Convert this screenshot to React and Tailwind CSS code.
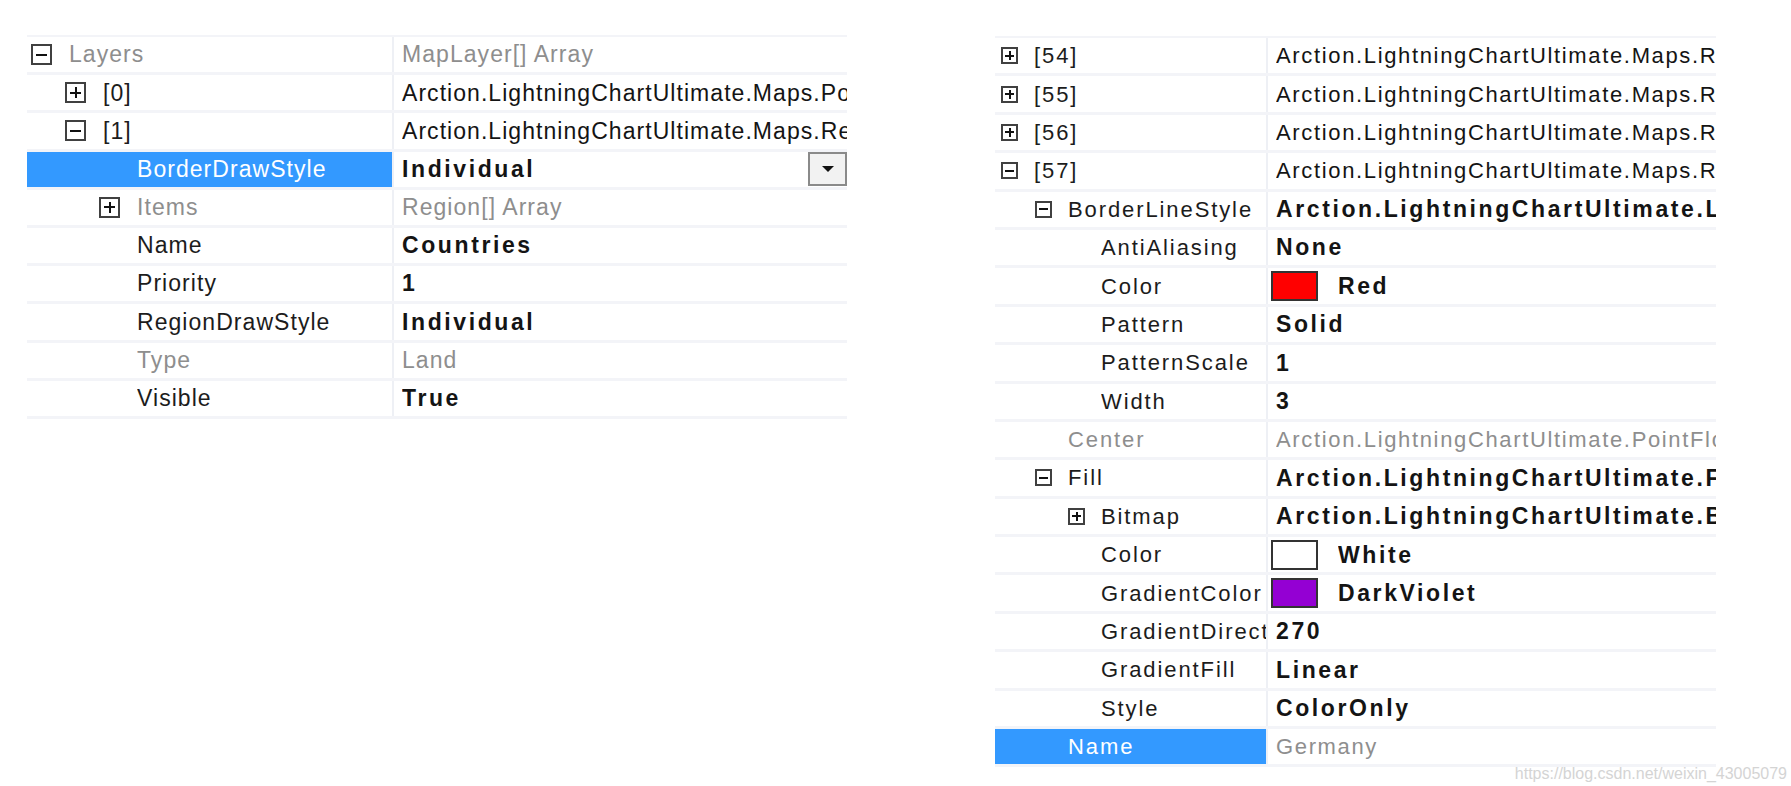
import React from 'react';

const INDENT = {
  left: ['pl-[4px]', 'pl-[38px]', 'pl-[72px]'],
  right: ['pl-[6px]', 'pl-[40px]', 'pl-[73px]'],
};

const LEFT_ROWS = [
  { level: 0, box: '-', label: 'Layers', value: 'MapLayer[] Array', muted: true },
  { level: 1, box: '+', label: '[0]', value: 'Arction.LightningChartUltimate.Maps.PolygonLayer' },
  { level: 1, box: '-', label: '[1]', value: 'Arction.LightningChartUltimate.Maps.RegionLayer' },
  { level: 2, label: 'BorderDrawStyle', value: 'Individual', bold: true, selected: true, dropdown: true },
  { level: 2, box: '+', label: 'Items', value: 'Region[] Array', muted: true },
  { level: 2, label: 'Name', value: 'Countries', bold: true },
  { level: 2, label: 'Priority', value: '1', bold: true },
  { level: 2, label: 'RegionDrawStyle', value: 'Individual', bold: true },
  { level: 2, label: 'Type', value: 'Land', muted: true },
  { level: 2, label: 'Visible', value: 'True', bold: true },
];

const RIGHT_ROWS = [
  { level: 0, box: '+', label: '[54]', value: 'Arction.LightningChartUltimate.Maps.Region' },
  { level: 0, box: '+', label: '[55]', value: 'Arction.LightningChartUltimate.Maps.Region' },
  { level: 0, box: '+', label: '[56]', value: 'Arction.LightningChartUltimate.Maps.Region' },
  { level: 0, box: '-', label: '[57]', value: 'Arction.LightningChartUltimate.Maps.Region' },
  { level: 1, box: '-', label: 'BorderLineStyle', value: 'Arction.LightningChartUltimate.LineStyle', bold: true },
  { level: 2, label: 'AntiAliasing', value: 'None', bold: true },
  { level: 2, label: 'Color', value: 'Red', bold: true, swatch: 'bg-[#ff0000]' },
  { level: 2, label: 'Pattern', value: 'Solid', bold: true },
  { level: 2, label: 'PatternScale', value: '1', bold: true },
  { level: 2, label: 'Width', value: '3', bold: true },
  { level: 1, label: 'Center', value: 'Arction.LightningChartUltimate.PointFloat', muted: true },
  { level: 1, box: '-', label: 'Fill', value: 'Arction.LightningChartUltimate.Fill', bold: true },
  { level: 2, box: '+', label: 'Bitmap', value: 'Arction.LightningChartUltimate.BitmapFill', bold: true },
  { level: 2, label: 'Color', value: 'White', bold: true, swatch: 'bg-white' },
  { level: 2, label: 'GradientColor', value: 'DarkViolet', bold: true, swatch: 'bg-[#9400d3]' },
  { level: 2, label: 'GradientDirection', value: '270', bold: true },
  { level: 2, label: 'GradientFill', value: 'Linear', bold: true },
  { level: 2, label: 'Style', value: 'ColorOnly', bold: true },
  { level: 1, label: 'Name', value: 'Germany', muted: true, selected: true },
];

function ExpandBox({ kind, small }) {
  return (
    <span
      className={`relative shrink-0 flex items-center justify-center border-2 border-[#404040] bg-white ${
        small ? 'w-[17px] h-[17px]' : 'w-[21px] h-[21px]'
      }`}
    >
      <span className={`absolute h-[2px] bg-[#111] ${small ? 'w-[9px]' : 'w-[11px]'}`} />
      {kind === '+' && (
        <span className={`absolute w-[2px] bg-[#111] ${small ? 'h-[9px]' : 'h-[11px]'}`} />
      )}
    </span>
  );
}

function DropButton() {
  return (
    <span className="shrink-0 w-[39px] h-[34px] border-2 border-[#8a8a8a] bg-[#f2f2f2] flex items-center justify-center">
      <svg width="14" height="8" viewBox="0 0 14 8">
        <path d="M1 1 L13 1 L7 7 Z" fill="#111" />
      </svg>
    </span>
  );
}

function Row({ row, side }) {
  const right = side === 'right';
  const labelText = right
    ? 'text-[22px] tracking-[1.9px]'
    : 'text-[23px] tracking-[1.05px]';
  const valueText = right
    ? 'text-[22px] tracking-[1.65px]'
    : 'text-[23px] tracking-[1.05px]';
  const bold = 'text-[23px] font-bold tracking-[2.6px]';
  const labelColor = row.selected
    ? 'text-white'
    : row.muted
      ? 'text-[#8e8e8e]'
      : 'text-[#1c1c1c]';

  return (
    <div className={`flex border-b-[3px] border-[#f3f4f8] ${right ? 'h-[38.4px]' : 'h-[38.2px]'}`}>
      <div
        className={`flex items-center overflow-hidden whitespace-nowrap border-r-2 border-[#eef0f5] ${
          right ? 'w-[273px]' : 'w-[367px]'
        } ${INDENT[side][row.level]} ${row.selected ? 'bg-[#3399ff]' : ''}`}
      >
        {row.box ? (
          <ExpandBox kind={row.box} small={right} />
        ) : (
          <span className={`shrink-0 ${right ? 'w-[17px]' : 'w-[21px]'}`} />
        )}
        <span
          className={`min-w-0 overflow-hidden ${right ? 'ml-[16px]' : 'ml-[17px]'} ${labelText} ${labelColor}`}
        >
          {row.label}
        </span>
      </div>
      <div className="flex-1 min-w-0 flex items-center overflow-hidden whitespace-nowrap pl-[8px]">
        {row.swatch && (
          <span className={`shrink-0 w-[47px] h-[30px] border-2 border-[#333] ${row.swatch} mr-[20px] -ml-[5px]`} />
        )}
        <span
          className={`flex-1 min-w-0 overflow-hidden ${row.bold ? bold : valueText} ${
            row.muted ? 'text-[#8e8e8e]' : 'text-[#141414]'
          }`}
        >
          {row.value}
        </span>
        {row.dropdown && <DropButton />}
      </div>
    </div>
  );
}

export default function App() {
  return (
    <div
      className="relative w-[1791px] h-[786px] bg-white flex items-start overflow-hidden"
      style={{ fontFamily: '"Liberation Sans", Arial, sans-serif' }}
    >
      {/* Left grid */}
      <div className="ml-[27px] mt-[35px] w-[820px] border-t-2 border-[#f3f4f8]">
        {LEFT_ROWS.map((r, i) => (
          <Row key={i} row={r} side="left" />
        ))}
      </div>

      {/* Right grid */}
      <div className="ml-[148px] mt-[36px] w-[721px] border-t-2 border-[#f3f4f8]">
        {RIGHT_ROWS.map((r, i) => (
          <Row key={i} row={r} side="right" />
        ))}
      </div>

      <span className="absolute right-[4px] bottom-[0px] text-[16px] text-[#d4d4d4]">
        https://blog.csdn.net/weixin_43005079
      </span>
    </div>
  );
}
